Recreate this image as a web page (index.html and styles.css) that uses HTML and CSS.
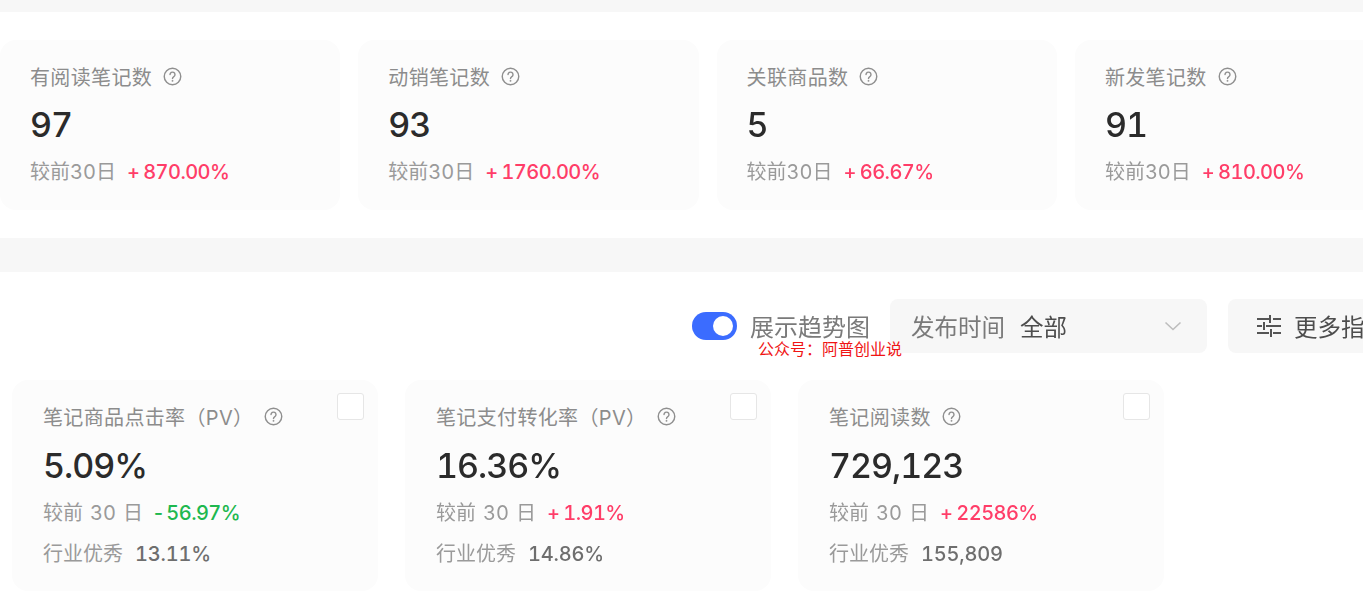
FILE: index.html
```html
<!DOCTYPE html>
<html lang="zh-CN">
<head>
    <meta charset="UTF-8">
    <meta name="viewport" content="width=device-width, initial-scale=1.0">
    <title>笔记数据</title>
    <link rel="stylesheet" href="styles.css">
</head>
<body>
    <svg class="defs" width="0" height="0">
        <symbol id="help" viewBox="0 0 20 20">
            <circle cx="10" cy="10" r="8.7" fill="none" stroke="currentColor" stroke-width="1.5"/>
            <path d="M7.4 8a2.6 2.6 0 1 1 4 2.2c-.9.6-1.4 1-1.4 2" fill="none" stroke="currentColor" stroke-width="1.5" stroke-linecap="round"/>
            <circle cx="10" cy="14.6" r="1" fill="currentColor"/>
        </symbol>
    </svg>

    <div class="page">
        <div class="band band-top"></div>

        <section class="summary">
            <div class="card summary-card">
                <div class="label">有阅读笔记数 <svg class="help"><use href="#help"/></svg></div>
                <div class="value">97</div>
                <div class="compare"><span>较前30日</span><span class="up">+ 870.00%</span></div>
            </div>
            <div class="card summary-card">
                <div class="label">动销笔记数 <svg class="help"><use href="#help"/></svg></div>
                <div class="value">93</div>
                <div class="compare"><span>较前30日</span><span class="up">+ 1760.00%</span></div>
            </div>
            <div class="card summary-card">
                <div class="label">关联商品数 <svg class="help"><use href="#help"/></svg></div>
                <div class="value">5</div>
                <div class="compare"><span>较前30日</span><span class="up">+ 66.67%</span></div>
            </div>
            <div class="card summary-card">
                <div class="label">新发笔记数 <svg class="help"><use href="#help"/></svg></div>
                <div class="value">91</div>
                <div class="compare"><span>较前30日</span><span class="up">+ 810.00%</span></div>
            </div>
        </section>

        <div class="band band-mid"></div>

        <div class="toolbar">
            <div class="toggle"><span class="knob"></span></div>
            <span class="toggle-text">展示趋势图</span>
            <div class="select">
                <span class="select-name">发布时间</span>
                <span class="select-value">全部</span>
                <svg class="chevron" viewBox="0 0 18 10"><path d="M1.5 1.5 9 8.5l7.5-7" fill="none" stroke="currentColor" stroke-width="1.6"/></svg>
            </div>
            <div class="more">
                <svg class="sliders" viewBox="0 0 24 22"><path d="M0 4h12M16 4h8M0 11h5M9 11h15M0 18h12M16 18h8M13 0v8M7 7v8M14 14v8" fill="none" stroke="currentColor" stroke-width="2"/></svg>
                <span>更多指标</span>
            </div>
        </div>

        <section class="metrics">
            <div class="card metric-card">
                <span class="check"></span>
                <div class="label">笔记商品点击率（PV） <svg class="help"><use href="#help"/></svg></div>
                <div class="value">5.09%</div>
                <div class="compare"><span class="spaced">较前 30 日</span><span class="down">- 56.97%</span></div>
                <div class="best"><span>行业优秀</span><span class="best-num">13.11%</span></div>
            </div>
            <div class="card metric-card">
                <span class="check"></span>
                <div class="label">笔记支付转化率（PV） <svg class="help"><use href="#help"/></svg></div>
                <div class="value">16.36%</div>
                <div class="compare"><span class="spaced">较前 30 日</span><span class="up">+ 1.91%</span></div>
                <div class="best"><span>行业优秀</span><span class="best-num">14.86%</span></div>
            </div>
            <div class="card metric-card">
                <span class="check"></span>
                <div class="label">笔记阅读数 <svg class="help"><use href="#help"/></svg></div>
                <div class="value">729,123</div>
                <div class="compare"><span class="spaced">较前 30 日</span><span class="up">+ 22586%</span></div>
                <div class="best"><span>行业优秀</span><span class="best-num">155,809</span></div>
            </div>
        </section>

        <div class="watermark">公众号：阿普创业说</div>
    </div>
</body>
</html>
```

FILE: styles.css
```css
* {
    box-sizing: border-box;
}

html, body {
    margin: 0;
    height: 100%;
    overflow: hidden;
    background: #ffffff;
}

body {
    font-family: "Inter", "Noto Sans CJK SC", sans-serif;
    font-variant-numeric: tabular-nums;
    color: #8f8f8f;
}

.defs {
    position: absolute;
}

.page {
    position: relative;
    width: 1363px;
    height: 601px;
    overflow: hidden;
}

/* the reference is a slightly soft, upscaled capture */
.summary, .toolbar, .metrics {
    filter: blur(0.35px);
}

.band {
    background: #f7f7f7;
}

.band-top {
    height: 12px;
}

.band-mid {
    height: 34px;
}

.card {
    position: relative;
    flex: none;
    background: #fcfcfc;
    border-radius: 16px;
}

.summary {
    display: flex;
    gap: 18px;
    padding: 28px 0;
}

.summary-card {
    width: 340.3px;
    height: 170px;
    padding: 23px 30px 0;
}

.label {
    display: flex;
    align-items: center;
    gap: 11px;
    height: 26px;
    font-size: 20px;
    letter-spacing: 0.35px;
    color: #8c8c8c;
}

.help {
    width: 19px;
    height: 19px;
    color: #8f8f8f;
}

.value {
    margin-top: 14px;
    height: 44px;
    line-height: 44px;
    font-size: 34px;
    font-weight: 500;
    letter-spacing: -1px;
    color: #2b2b2b;
}

.compare {
    display: flex;
    align-items: baseline;
    gap: 11px;
    margin-top: 9px;
    height: 28px;
    font-size: 20px;
    color: #9a9a9a;
}

.spaced {
    word-spacing: 1.7px;
}

.up, .down {
    font-weight: 500;
    letter-spacing: -0.55px;
    word-spacing: -1px;
}

.up {
    color: #ff3d68;
}

.down {
    color: #1eb84f;
    margin-left: -2px;
    word-spacing: -3px;
}

.toolbar {
    display: flex;
    align-items: center;
    height: 108px;
    padding: 0 0 0 692px;
    width: 1500px;
}

.toggle {
    width: 45px;
    height: 28px;
    border-radius: 14px;
    background: #3b6cff;
    padding: 4px;
    display: flex;
    justify-content: flex-end;
}

.knob {
    width: 20px;
    height: 20px;
    border-radius: 50%;
    background: #ffffff;
}

.toggle-text {
    margin-left: 13px;
    margin-top: -2px;
    font-size: 24px;
    color: #7a7a7a;
}

.select {
    display: flex;
    align-items: center;
    width: 317px;
    height: 54px;
    margin-left: 20px;
    padding: 0 25px 0 21px;
    border-radius: 8px;
    background: #f7f7f7;
    font-size: 23.5px;
}

.select-name {
    color: #7a7a7a;
}

.select-value {
    margin-left: 15px;
    color: #4d4d4d;
}

.chevron {
    width: 18px;
    height: 10px;
    margin-left: auto;
    color: #bdbdbd;
}

.more {
    display: flex;
    align-items: center;
    gap: 13px;
    width: 200px;
    height: 54px;
    margin-left: 21px;
    padding-left: 29px;
    border-radius: 8px;
    background: #f7f7f7;
    font-size: 23.5px;
    color: #4d4d4d;
}

.sliders {
    width: 24px;
    height: 22px;
    color: #555555;
}

.metrics {
    display: flex;
    gap: 27px;
    padding-left: 12px;
}

.metric-card {
    width: 366px;
    height: 211px;
    padding: 23px 31px 0;
}

.metric-card .value {
    margin-top: 15px;
}

.check {
    position: absolute;
    top: 13px;
    right: 14px;
    width: 27px;
    height: 27px;
    border: 1px solid #e6e6e6;
    border-radius: 3px;
    background: #ffffff;
}

.best {
    display: flex;
    align-items: baseline;
    gap: 12px;
    margin-top: 13px;
    height: 28px;
    font-size: 20px;
    color: #9a9a9a;
}

.best-num {
    font-weight: 500;
    letter-spacing: -0.2px;
    color: #6e6e6e;
}

.watermark {
    position: absolute;
    left: 758px;
    top: 339px;
    font-size: 16px;
    line-height: 20px;
    white-space: nowrap;
    color: #f01414;
}
```
